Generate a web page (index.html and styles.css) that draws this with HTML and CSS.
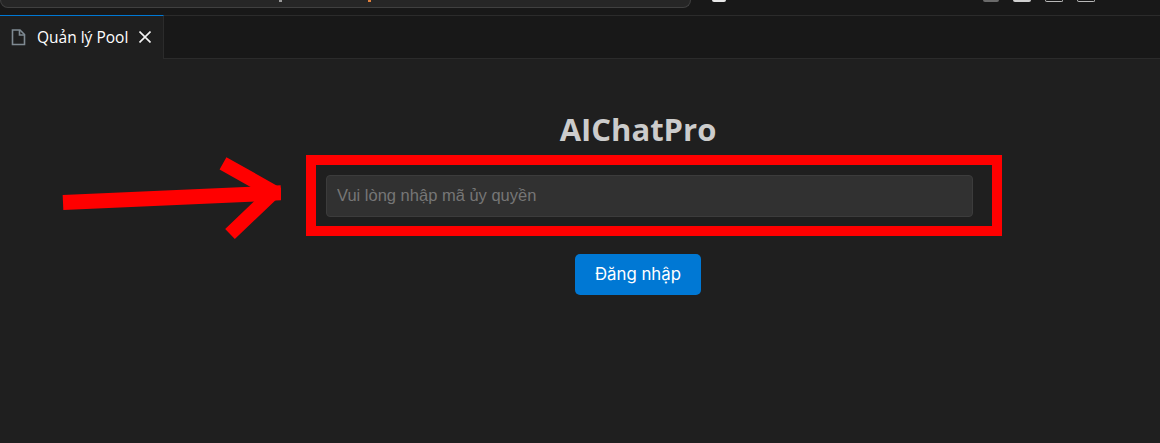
FILE: index.html
```html
<!DOCTYPE html>
<html lang="en">
<head>
    <meta charset="UTF-8">
    <meta name="viewport" content="width=device-width, initial-scale=1.0">
    <title>Quản lý Pool</title>
    <link rel="stylesheet" href="styles.css">
</head>
<body>
    <div class="top-bar">
        <div class="address-bar">
            <span class="url-mark url-gray"></span>
            <span class="url-mark url-orange"></span>
        </div>
        <span class="profile"></span>
        <span class="tool tool-dim"></span>
        <span class="tool"></span>
        <span class="tool tool-hollow"></span>
        <span class="tool tool-hollow"></span>
    </div>

    <div class="tab-bar">
        <div class="tab">
            <svg class="tab-file" width="15" height="17" viewBox="0 0 15 17" fill="none" stroke="#7f8a92" stroke-width="1.6">
                <path d="M1.5 1H9L13.5 5.5V15.5H1.5Z"/>
                <path d="M8.5 1V6H13.5"/>
            </svg>
            <span class="tab-title">Quản lý Pool</span>
            <svg class="tab-close" width="12" height="12" viewBox="0 0 12 12" stroke="#f4f4f4" stroke-width="1.6">
                <path d="M0.5 0.5L11.5 11.5M11.5 0.5L0.5 11.5"/>
            </svg>
        </div>
    </div>

    <div class="login">
        <h1>AIChatPro</h1>
        <div class="red-box">
            <input type="text" placeholder="Vui lòng nhập mã ủy quyền">
        </div>
        <button>Đăng nhập</button>
    </div>

    <svg class="arrow" width="231" height="100" viewBox="0 0 231 100" fill="none" stroke="#ff0000">
        <path d="M13 57.5L231 47.8" stroke-width="15"/>
        <path d="M173 18.3L224 47L180 89" stroke-width="14"/>
    </svg>
</body>
</html>
```

FILE: styles.css
```css
html, body {
    height: 100%;
}
body {
    margin: 0;
    background-color: #1f1f1f;
    font-family: "Liberation Sans", Arial, sans-serif;
    overflow: hidden;
    position: relative;
}
.top-bar {
    height: 16px;
    box-sizing: border-box;
    display: flex;
    align-items: flex-start;
    background-color: #181818;
    border-bottom: 1px solid #2b2b2b;
}
.address-bar {
    width: 691px;
    height: 8px;
    box-sizing: border-box;
    display: flex;
    background-color: #262626;
    border: 1px solid #404040;
    border-top: none;
    border-radius: 0 0 8px 8px;
}
.url-mark {
    width: 3px;
    height: 2px;
}
.url-gray {
    margin-left: 278px;
    background-color: #999999;
}
.url-orange {
    margin-left: 86px;
    background-color: #e0803c;
}
.profile {
    width: 14px;
    height: 2px;
    margin-left: 21px;
    background-color: #e8e8e8;
    border-radius: 0 0 7px 7px;
}
.tool {
    width: 18px;
    height: 2px;
    margin-left: 14px;
    background-color: #d0d0d0;
    border-radius: 0 0 3px 3px;
}
.tool-dim {
    width: 16px;
    margin-left: 257px;
    background-color: #6a6a6a;
}
.tool-hollow {
    background-color: #181818;
    border: 1px solid #b8b8b8;
    border-top: none;
    box-sizing: border-box;
}
.tab-bar {
    height: 43px;
    box-sizing: border-box;
    display: flex;
    background-color: #181818;
    border-bottom: 1px solid #2b2b2b;
}
.tab {
    width: 164px;
    height: 44px;
    box-sizing: border-box;
    margin-top: -1px;
    padding: 0 0 1px 11px;
    display: flex;
    align-items: center;
    background-color: #1f1f1f;
    border-top: 1px solid #0078d4;
    border-right: 1px solid #2b2b2b;
}
.tab-title {
    margin-left: 11px;
    color: #ffffff;
    font-family: "Open Sans", sans-serif;
    font-size: 15.5px;
    white-space: nowrap;
}
.tab-close {
    margin-left: 11px;
}
.login {
    display: flex;
    flex-direction: column;
    align-items: center;
    width: 664px;
    margin-left: 306px;
}
h1 {
    margin: 48px 0 3px;
    color: #cccccc;
    font-family: "Open Sans", sans-serif;
    font-size: 31px;
    font-weight: 700;
    line-height: 45px;
}
.red-box {
    align-self: flex-start;
    width: 696px;
    height: 81px;
    box-sizing: border-box;
    border: 10px solid #ff0000;
    padding: 10px 19px 9px 10px;
}
input {
    display: block;
    width: 100%;
    height: 42px;
    box-sizing: border-box;
    padding: 0 10px 2px;
    background-color: #313131;
    border: 1px solid #3c3c3c;
    border-radius: 4px;
    color: #cccccc;
    font-family: "Liberation Sans", Arial, sans-serif;
    font-size: 16.5px;
}
input::placeholder {
    color: #767676;
}
button {
    width: 126px;
    height: 41px;
    margin-top: 18px;
    padding: 0 0 2px;
    background-color: #0078d4;
    color: #ffffff;
    border: none;
    border-radius: 5px;
    font-family: Inter, sans-serif;
    font-size: 16.8px;
}
.arrow {
    position: absolute;
    left: 50px;
    top: 145px;
}
```
